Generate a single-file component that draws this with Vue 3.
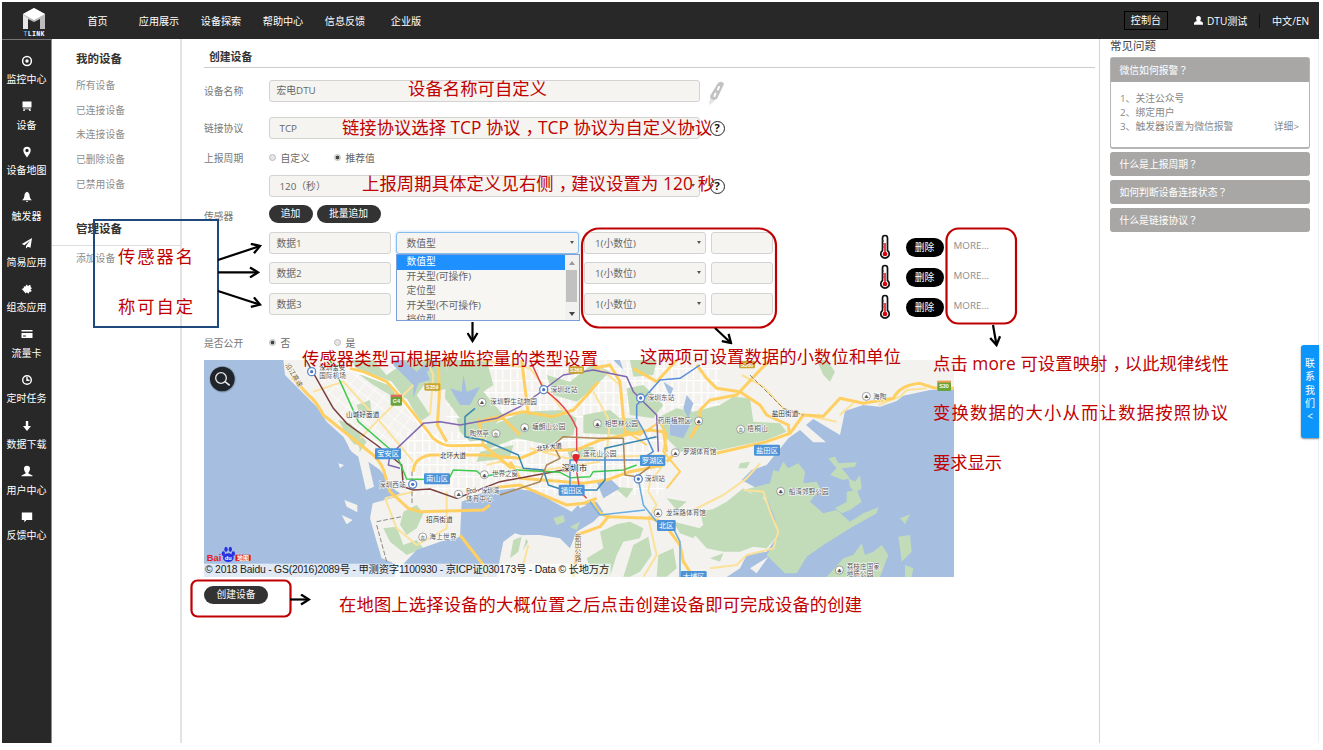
<script setup>
const topNav = ['首页', '应用展示', '设备探索', '帮助中心', '信息反馈', '企业版']
const sideNav = [
  { icon: 'target', text: '监控中心' },
  { icon: 'screen', text: '设备' },
  { icon: 'pin', text: '设备地图' },
  { icon: 'bell', text: '触发器' },
  { icon: 'plane', text: '简易应用' },
  { icon: 'puzzle', text: '组态应用' },
  { icon: 'card', text: '流量卡' },
  { icon: 'clock', text: '定时任务' },
  { icon: 'down', text: '数据下载' },
  { icon: 'user', text: '用户中心' },
  { icon: 'chat', text: '反馈中心' },
]
const myDevices = ['所有设备', '已连接设备', '未连接设备', '已删除设备', '已禁用设备']
const sensors = ['数据1', '数据2', '数据3']
const typeOptions = ['数值型', '开关型(可操作)', '定位型', '开关型(不可操作)', '挡位型']
const faqs = ['什么是上报周期', '如何判断设备连接状态', '什么是链接协议']

const districts = [
  { x: 525, y: 280, w: 78, t: '宝安区' },
  { x: 672, y: 355, w: 78, t: '南山区' },
  { x: 1076, y: 389, w: 78, t: '福田区' },
  { x: 1320, y: 300, w: 76, t: '罗湖区' },
  { x: 1371, y: 495, w: 56, t: '北区' },
  { x: 1662, y: 269, w: 78, t: '盐田区' },
  { x: 1442, y: 648, w: 78, t: '大埔区' },
]
const places = [
  { x: 358, y: 46, w: 78, t: '深圳宝安' },
  { x: 358, y: 68, w: 80, t: '国际机场' },
  { x: 438, y: 187, w: 100, t: '山城好面道', d: 1 },
  { x: 537, y: 395, w: 80, t: '深圳西站' },
  { x: 720, y: 310, w: 78, t: '北环大道', d: 1 },
  { x: 1010, y: 289, w: 78, t: '北环大道', d: 1, r: -8 },
  { x: 678, y: 500, w: 80, t: '招商街道', d: 1 },
  { x: 688, y: 553, w: 82, t: '海上世界' },
  { x: 1052, y: 111, w: 80, t: '深圳北站' },
  { x: 871, y: 148, w: 140, t: '深圳野生动物园' },
  { x: 996, y: 223, w: 100, t: '塘朗山公园' },
  { x: 809, y: 243, w: 58, t: '陶然亭' },
  { x: 876, y: 364, w: 78, t: '世界之窗' },
  { x: 798, y: 414, w: 100, t: 'Red•深圳湾' },
  { x: 798, y: 437, w: 80, t: '体育中心' },
  { x: 1149, y: 304, w: 100, t: '莲花山公园' },
  { x: 1214, y: 212, w: 100, t: '相思林公园' },
  { x: 1343, y: 136, w: 80, t: '深圳东站' },
  { x: 1373, y: 204, w: 100, t: '药用植物区' },
  { x: 1449, y: 298, w: 100, t: '罗湖体育馆' },
  { x: 1335, y: 379, w: 60, t: '深圳站' },
  { x: 1398, y: 481, w: 120, t: '龙琛路体育馆' },
  { x: 1715, y: 183, w: 80, t: '盐田街道', d: 1 },
  { x: 1642, y: 229, w: 62, t: '梧桐山' },
  { x: 2019, y: 131, w: 40, t: '海陶' },
  { x: 1766, y: 416, w: 120, t: '船湾郊野公园' },
  { x: 1940, y: 641, w: 100, t: '荔枝庄国家' },
  { x: 1940, y: 663, w: 80, t: '地质公园' },
]
const poiDots = [
  [846, 142, '▲'], [974, 218, '♣'], [888, 236, '血'], [853, 359, '♣'], [776, 418, '▲'],
  [1192, 206, '♣'], [1426, 293, '▲'], [1374, 474, '▲'], [1496, 198, '♣'], [1622, 223, '血'],
  [1999, 124, '▲'], [1742, 409, '♣'], [1918, 645, '♣'], [668, 546, '血'], [1126, 299, '♣'],
]
const stations = [[638, 388], [1031, 104], [1322, 129], [1315, 372], [335, 50]]

const arrows = [
  'M218 260L260 246', 'M218 272.4H258', 'M218 291L260 304.6',
  'M472.5 322V341', 'M715 328L731 343', 'M993 325L996.5 345', 'M290 599.5H309',
]
const notes = [
  { x: 408, y: 94.5, w: 139, t: '设备名称可自定义' },
  { x: 342, y: 134, w: 370, t: '链接协议选择 TCP 协议，TCP 协议为自定义协议' },
  { x: 362, y: 190, w: 353, t: '上报周期具体定义见右侧，建议设置为 120 秒' },
  { x: 118, y: 263, w: 75, t: '传感器名' },
  { x: 118, y: 313, w: 75, t: '称可自定' },
  { x: 302, y: 364.5, w: 296, t: '传感器类型可根据被监控量的类型设置' },
  { x: 640, y: 363, w: 261, t: '这两项可设置数据的小数位和单位' },
  { x: 933, y: 370, w: 296, t: '点击 more 可设置映射，以此规律线性' },
  { x: 933, y: 419, w: 295, t: '变换数据的大小从而让数据按照协议' },
  { x: 933, y: 469, w: 69, t: '要求显示' },
  { x: 339, y: 611, w: 523, t: '在地图上选择设备的大概位置之后点击创建设备即可完成设备的创建' },
]
// The comma sits in the middle of its em box, so it is nudged right and the next glyph back.
const shifts = (t) => {
  const i = t.indexOf('，')
  if (i < 0) return null
  return Array.from(t, (_, k) => (k === i ? 5 : k === i + 1 ? -5 : 0)).join(' ')
}
</script>

<template>
  <div class="page">
    <header class="top">
      <svg class="logo" viewBox="0 0 28 30" width="28" height="30">
        <path d="M3 6L14 0 25 6V21H20V11L14 14 8 11V21H3Z" fill="#bdbdbd" />
        <path d="M3 6L14 0 25 6 14 12Z" fill="#fff" />
        <path d="M3 7L8 10V21H3Z" fill="#e6e6e6" />
        <text x="3.500" y="28" textLength="21" class="logo-text"><tspan fill="#4fa9e0">T</tspan>LINK</text>
      </svg>
      <nav class="menu"><a v-for="n in topNav" :key="n">{{ n }}</a></nav>
      <div class="account">
        <span class="console">控制台</span>
        <svg class="user" width="9" height="9" viewBox="0 0 12 12"><path d="M6 0C8.200 0 9.200 1.400 9.200 3.200S8.200 6.600 7.800 6.800C9.500 7.300 12 8 12 10V11.500H0V10C0 8 2.500 7.300 4.200 6.800 3.800 6.600 2.800 5 2.800 3.200S3.800 0 6 0Z" fill="#fff" /></svg>
        <span class="name">DTU测试</span>
        <span class="lang">中文/EN</span>
      </div>
    </header>

    <div class="body">
      <nav class="side">
        <div v-for="s in sideNav" :key="s.icon" class="side-item">
          <svg width="12" height="12" viewBox="0 0 12 12" fill="#fff">
            <g v-if="s.icon === 'target'"><circle cx="6" cy="6" r="4.400" fill="none" stroke="#fff" stroke-width="1.500" /><circle cx="6" cy="6" r="1.700" /></g>
            <g v-else-if="s.icon === 'screen'"><path d="M1.500 1.500H10.500V7.500H1.500Z" /><path d="M2 8.500H10V9.300H2ZM3 9L2 11H3.500L4.500 9ZM9 9L10 11H8.500L7.500 9Z" /></g>
            <path v-else-if="s.icon === 'pin'" fill-rule="evenodd" d="M6 .8A3.700 3.700 0 0 1 9.700 4.500C9.700 7 7.500 9 6 11.500 4.500 9 2.300 7 2.300 4.500A3.700 3.700 0 0 1 6 .8ZM6 2.800A1.700 1.700 0 1 0 6 6.200 1.700 1.700 0 0 0 6 2.800Z" />
            <path v-else-if="s.icon === 'bell'" d="M6 .8C8 1.500 8.500 3 8.700 5.500 9 7.500 10 8 10.800 9.300H1.200C2 8 3 7.500 3.300 5.500 3.500 3 4 1.500 6 .8ZM4.800 10H7.200L6 11.300Z" />
            <path v-else-if="s.icon === 'plane'" d="M11 1L.8 7 3.500 8.200 9 3.500 5 9V11.500L6.800 9.700 9.500 10.800Z" />
            <path v-else-if="s.icon === 'puzzle'" d="M5.500 1.500L7.300 3.200C8 1 10.500 1.800 9.600 4L11 5.200 9.300 6.500C11.500 7 10.500 9.500 8.500 8.700L7.500 10.800 5.800 9.300 4.800 10.500 .8 6 2.800 5 2.800 3.200 4.500 3.500Z" />
            <path v-else-if="s.icon === 'card'" fill-rule="evenodd" d="M.5 2H11.500V3.500H.5ZM.5 5H11.500V10H.5ZM2 7.500V8.500H5V7.500Z" />
            <g v-else-if="s.icon === 'clock'" fill="none" stroke="#fff" stroke-width="1.400"><circle cx="6" cy="6" r="4.300" /><path d="M6 3V6.300H8.500" /></g>
            <path v-else-if="s.icon === 'down'" d="M4.800 1H7.200V6H10L6 11 2 6H4.800Z" />
            <path v-else-if="s.icon === 'user'" d="M6 .7C8 .7 9 2 9 3.700S8 7 7.500 7.300V8.500L11.500 10.500V11.300H.5V10.500L4.500 8.500V7.300C4 7 3 5.500 3 3.700S4 .7 6 .7Z" />
            <path v-else d="M.8 1.500H11.200V9H5.500L3.300 11.300V9H.8Z" />
          </svg>
          <span>{{ s.text }}</span>
        </div>
      </nav>

      <aside class="sub">
        <h3>我的设备</h3>
        <a v-for="d in myDevices" :key="d">{{ d }}</a>
        <h3 class="second">管理设备</h3>
        <a class="add">添加设备</a>
      </aside>

      <main class="main">
        <h2>创建设备</h2>
        <div class="row r1">
          <label>设备名称</label><div class="field wide">宏电DTU</div>
          <svg class="pen" width="18" height="24" viewBox="0 0 18 24">
            <path d="M10 2Q14-1 16 3L9 18 3 20 2 15Z" fill="#c2c2c2" /><path d="M2 17L7 20 1 24Z" fill="#e4e4e4" /><path d="M11 6L10 8.500M7.500 12.500L6.500 15" stroke="#fff" stroke-width="2" stroke-linecap="round" />
          </svg>
        </div>
        <div class="row r2">
          <label>链接协议</label><div class="field wide in">TCP<i class="caret"></i></div><b class="help">?</b>
        </div>
        <div class="row r3">
          <label>上报周期</label><i class="radio"></i><span class="opt">自定义</span><i class="radio on"></i><span>推荐值</span>
        </div>
        <div class="row r4">
          <label></label><div class="field wide in">120（秒）<i class="caret"></i></div><b class="help">?</b>
        </div>
        <div class="row r5">
          <label class="low">传感器</label><span class="pill add1">追加</span><span class="pill add2">批量追加</span>
        </div>
        <div class="sensors">
          <div v-for="(s, i) in sensors" :key="s" class="row sensor">
            <div class="field name">{{ s }}</div>
            <div class="field type" :class="{ focus: i === 0 }">
              数值型<i class="caret"></i>
              <div v-if="i === 0" class="drop">
                <div class="list"><div v-for="(o, k) in typeOptions" :key="o" :class="{ sel: k === 0 }">{{ o }}</div></div>
                <div class="scroll"><i class="up"></i><i class="thumb"></i><i class="dn"></i></div>
              </div>
            </div>
            <div class="field dec">1(小数位)<i class="caret"></i></div>
            <div class="field unit"></div>
            <svg class="thermo" width="12" height="26" viewBox="0 0 12 26">
              <path d="M3.500 16.500V4A2.500 2.500 0 0 1 8.500 4V16.500A4.200 4.200 0 1 1 3.500 16.500Z" fill="#fff" stroke="#111" stroke-width="1.700" />
              <path d="M6 9V18" stroke="#e0323c" stroke-width="1.800" /><circle cx="6" cy="20" r="2.300" fill="#d8000c" /><path d="M3.500 7H5M3.500 10H5M3.500 13H5" stroke="#444" />
            </svg>
            <span class="pill del">删除</span><span class="more">MORE...</span>
          </div>
        </div>
        <div class="row r6">
          <label>是否公开</label><i class="radio on"></i><span class="opt2">否</span><i class="radio"></i><span>是</span>
        </div>

        <svg class="map" width="750" height="217" viewBox="12 15 2250 651" preserveAspectRatio="none">
          <defs>
            <pattern id="streets" width="34" height="30" patternUnits="userSpaceOnUse" patternTransform="rotate(38)"><path d="M0 0H34M0 0V30" stroke="#fff" stroke-width="4" /></pattern>
            <pattern id="blocks" width="44" height="36" patternUnits="userSpaceOnUse"><path d="M0 5H44M8 0V36M28 5V36" stroke="#fff" stroke-width="4" /></pattern>
          </defs>
          <rect x="12" y="15" width="2250" height="651" fill="#f3f2ee" />
          <path d="M320 15H660L640 260 520 300 420 180Z" fill="url(#streets)" />
          <path d="M600 230H1390V420H620ZM740 15H1270V200H740ZM1000 20H1560V170H1180Z" fill="url(#blocks)" />
          <!-- parks and hills -->
          <g fill="#c2dcb9">
            <path d="M455 15H520L560 60 590 40 600 15H735L745 100 705 110 680 80 650 120 690 180 660 200 620 130 570 120 520 90 480 60Z" />
            <path d="M470 150L510 135 515 180 480 185ZM415 195L450 205 500 260 480 290 440 240Z" />
            <path d="M740 15H860L880 90 850 110 910 180 860 240 780 190 735 130Z" />
            <path d="M770 190L850 190 880 210 970 170 1090 165 1130 190 1120 240 1080 250 1050 270 950 250 870 280 820 270 780 230Z" />
            <path d="M1150 180L1230 165 1260 190 1310 190 1330 230 1270 240 1150 235Z" />
            <path d="M1040 60L1110 80 1180 25 1230 50 1180 100 1130 140 1060 120Z" />
            <path d="M1290 15H1370L1360 60 1300 65ZM1280 100L1330 90 1390 150 1360 190 1290 180Z" />
            <path d="M1370 190L1430 160 1480 170 1560 150 1600 125 1650 130 1660 200 1740 205 1760 230 1700 255 1560 285 1440 290 1400 250Z" />
            <path d="M840 290L940 270 930 310 830 320ZM1100 280L1180 275 1190 310 1110 315Z" />
            <path d="M610 470L650 450 670 475 650 520 620 540 600 510ZM550 520L590 515 610 570 650 555 670 580 620 600 570 560Z" />
            <path d="M945 575L970 540 985 560 960 600 930 650 905 640ZM1050 480L1110 475 1130 500 1080 520Z" />
            <path d="M1200 530L1250 508 1290 500 1330 520 1320 550 1270 560 1250 600 1230 665H1180L1160 610 1210 580ZM1300 570L1345 545 1355 600 1320 650 1290 665H1270ZM1240 395L1300 400 1280 430Z" />
            <path d="M1420 500L1500 520 1480 550 1440 535ZM1400 430L1460 440 1430 465ZM1375 600L1420 580 1430 640 1400 665H1370Z" />
            <path d="M1500 470L1540 462 1580 440 1630 400 1650 415 1680 415 1710 460 1735 540 1700 580 1660 575 1620 590 1570 590 1520 580 1480 535 1510 510Z" />
            <path d="M1850 15H1880L1905 50 1890 80 1870 60ZM1620 325L1650 320 1640 340 1615 340ZM1530 610L1570 595 1560 620Z" />
          </g>
          <!-- sea, bays and reservoirs -->
          <g fill="#a6bfe0">
            <path d="M12 15H250L255 60 300 105 350 155 380 200 430 245 455 290 475 305 498 405 522 395 505 320 540 345 585 405 600 415 585 427 518 445 510 490 530 560 545 610 575 622 590 640 600 666 612 625 650 585 720 560 780 545 785 440 850 412 940 400 1010 410 1060 440 1115 470 1140 445 1190 440 1210 470 1180 500 1130 530 1110 580 1080 550 1020 540 960 540 920 590 905 666H12Z" />
            <path d="M2262 103L2190 105 2110 122 2090 138 2040 155 1990 150 1935 168 1920 240 1895 225 1840 192 1818 210 1878 262 1840 262 1800 225 1765 250 1700 330 1655 345 1625 375 1680 405 1710 460 1735 540 1700 590 1640 600 1620 640 1580 666H2262Z" />
            <path d="M580 30L610 60 640 90 640 130 655 85 690 75 680 50 730 15H690L650 50 610 15H580ZM750 100L785 110 790 60 800 110 840 95 810 150 780 150ZM1190 380L1230 370 1260 400 1210 430ZM1410 190L1450 210 1480 190 1450 250 1410 240Z" />
            <path d="M1240 15L1270 45 1260 15ZM1390 80L1420 100 1410 125ZM1460 120L1480 145 1465 190 1450 160Z" />
          </g>
          <g fill="#f3f2ee">
            <path d="M433 435L472 450 472 472 440 455ZM425 480L458 495 440 508ZM415 325L432 330 420 340ZM442 265L475 270 480 285 450 285ZM575 580L610 590 600 666H585Z" />
            <path d="M910 560L945 535 980 545 965 600 1000 620 980 666H890L900 610ZM1130 440L1160 450 1140 460ZM1650 640L1705 605 1670 655Z" />
          </g>
          <path d="M1060 490L1090 480 1095 500 1070 510ZM1110 515L1140 500 1130 525ZM940 555L965 545 955 590 930 610Z" fill="#c2dcb9" />
          <!-- eastern peninsulas and islands -->
          <g fill="#c2dcb9">
            <path d="M1630 405L1710 385 1720 345 1735 350 1750 320 1765 340 1795 325 1815 350 1810 385 1850 380 1860 400 1830 440 1870 475 1910 465 1950 500 1990 475 2035 457 2030 475 1950 520 1870 570 1820 605 1790 655 1755 655 1700 600 1735 550 1725 490 1700 430Z" />
            <path d="M1885 310L1905 305 1915 325 1970 322 1965 335 1925 340 1950 370 1930 375 1890 360 1910 340ZM1945 370L1965 380 1980 360 1985 400 1965 415 1950 395ZM1940 410L1970 405 1985 440 1950 465 1925 475 1905 460 1940 440Z" />
            <path d="M2100 490L2130 478 2115 508ZM2095 545L2130 540 2135 590 2105 620 2100 580ZM1880 666L1930 610 1960 600 1985 565 1995 600 2020 590 2045 570 2065 600 2040 666ZM2115 630L2140 640 2135 666H2115Z" />
          </g>
          <!-- minor roads -->
          <g fill="none" stroke="#fbe19a" stroke-width="6" stroke-linejoin="round">
            <path d="M340 110L430 80 540 200 640 320M480 250L560 170 640 90M690 180L700 60 680 15M555 430L640 410M555 430L590 520 650 570 740 520 740 410M840 15L990 40 1100 180M1180 110L1230 200 1220 290M1170 15L1260 90M990 280L1100 310 1400 300M860 330L900 320 1000 350 1200 320" />
            <path d="M1345 410L1350 380 1390 330M1345 410L1370 450 1345 490 1370 600 1330 666M1625 60L1690 95 1750 160 1790 175 1910 200M1630 405L1690 410 1710 470 1735 530 1720 580 1640 600 1610 630 1530 640M1470 470L1570 420 1640 370 1680 325M960 666L985 570M1920 180L1960 145M2035 150L2100 125 2120 105 2180 100" />
          </g>
          <!-- main roads -->
          <g fill="none" stroke="#fff" stroke-width="13"><path d="M450 40L570 85 680 230 740 275 860 260" /></g>
          <g fill="none" stroke="#ffcf62" stroke-width="9" stroke-linejoin="round">
            <path d="M275 65L325 120Q350 140 370 180L520 300Q550 330 555 360L570 410 625 460 660 470 850 465 870 450" />
            <path d="M450 40L490 50 560 80 605 130 700 250Q730 275 760 272L850 270 935 340" />
            <path d="M640 350Q640 310 690 300L850 300 960 310 1020 285 1130 285 1200 255 1350 225 1390 230 1400 290" />
            <path d="M715 15L718 120 712 210 740 260M835 190L850 270M840 200L910 190 960 240M965 15L985 180M850 195L970 170 1060 185 1120 165 1170 110 1195 80" />
            <path d="M870 400L960 390 1040 425 1100 450 1150 445 1190 430M930 320L960 370 1150 385 1220 375 1290 350 1390 330M1180 40L1230 30 1260 80 1275 240M1400 320L1430 290M1300 40L1370 80 1430 15" />
            <path d="M1180 440Q1190 480 1230 485L1350 490Q1400 500 1410 530L1440 570 1450 620 1480 666M780 540L850 630 860 666M1130 540L1200 515 1225 485M1135 545L1120 666" />
            <path d="M1470 250L1500 200 1500 165 1530 135 1610 120 1685 40 1710 15M1490 30L1520 70 1550 100 1620 110 1680 150 1700 180 1765 210 1768 235" />
            <path d="M1550 295L1700 260 1770 235 1810 180 1870 184 1920 130 1990 145 2080 130Q2100 90 2160 85L2200 98 2262 100" />
            <path d="M1400 400L1440 350 1390 290 1400 240 1380 200 1320 240 1280 230 1340 270" stroke-width="6" />
          </g>
          <!-- metro and rail lines -->
          <g fill="none" stroke-width="4.500" stroke-linejoin="round">
            <path d="M318 15L400 160 440 205 530 270 605 330 610 395 640 405 690 402 770 430 900 380 1090 345 1110 345" stroke="#7b3d3d" />
            <path d="M390 15L430 100 475 200 590 300 620 372 745 375 760 345 830 348 850 365 950 345 1080 352 1110 368 1170 365 1180 350 1270 345 1310 330" stroke="#3fcb4e" />
            <path d="M600 340L565 330 570 300 670 205 720 200 780 210 890 190 960 155 1010 120 1090 60 1180 45 1280 65 1300 110 1370 180 1375 290" stroke="#8067b0" />
            <path d="M990 15L1031 104Q1100 150 1130 220V350L1140 410 1160 430" stroke="#e1464f" />
            <path d="M825 160L795 185 795 245 850 255 955 300 970 340 1030 345 1045 390 1090 405 1190 405 1215 375 1215 280 1370 245" stroke="#3a87b0" />
            <path d="M1500 30L1440 70 1380 75 1340 120 1310 150 1310 190 1330 225 1360 290 1320 315H1110V410" stroke="#568dda" />
            <path d="M900 420L1020 380 1040 330 1080 310 1060 270 1090 245 1190 250 1270 250 1275 360 1310 365 1350 335" stroke="#ad8756" />
            <path d="M1315 372L1330 450 1370 500 1420 520 1440 560 1440 666M1335 465L1200 480 1170 440" stroke="#69aee2" />
            <path d="M636 350V450M530 500L605 485M530 510L560 620M1650 60L1750 160 1810 180" stroke="#888" stroke-width="3" stroke-dasharray="14 6" />
          </g>
          <g class="lbl">
            <text v-for="p in places" :key="p.t + p.x" :x="p.x" :y="p.y" :textLength="p.w" :class="{ dark: p.d }" :transform="p.r ? `rotate(${p.r} ${p.x} ${p.y})` : null">{{ p.t }}</text>
            <text x="255" y="30" class="road" textLength="80" transform="rotate(58 255 30)">沿江高速</text>
            <text x="1134" y="538" class="road" writing-mode="tb" textLength="82">新田公路</text>
          </g>
          <g v-for="p in poiDots" :key="p[0]"><circle :cx="p[0]" :cy="p[1]" r="12" fill="#fff" stroke="#777" stroke-width="2" /><text :x="p[0]" :y="p[1] + 6" class="poi">{{ p[2] }}</text></g>
          <g v-for="s in stations" :key="s[0]"><circle :cx="s[0]" :cy="s[1]" r="12" fill="#fff" stroke="#5c88cc" stroke-width="4" /><circle :cx="s[0]" :cy="s[1]" r="5" fill="#4a78c4" /></g>
          <g class="lbl"><text x="1085" y="347" textLength="76" class="city">深圳市</text></g>
          <g class="district"><g v-for="d in districts" :key="d.t"><rect :x="d.x" :y="d.y" :width="d.w" height="33" rx="4" /><text :x="d.x + d.w / 2" :y="d.y + 24">{{ d.t }}</text></g></g>
          <g class="shield">
            <rect x="572" y="121" width="34" height="31" rx="4" fill="#6aa338" /><rect x="572" y="119" width="34" height="7" fill="#d96e5b" /><text x="589" y="145">G4</text>
            <rect x="2212" y="79" width="41" height="29" rx="4" fill="#6aa338" /><rect x="2212" y="77" width="41" height="6" fill="#e39c4c" /><text x="2232" y="100">S30</text>
            <rect x="673" y="85" width="48" height="22" rx="4" fill="#c9a530" /><text x="697" y="102">S359</text>
            <rect x="1106" y="34" width="46" height="22" rx="4" fill="#c9a530" /><text x="1129" y="51">S360</text>
            <rect x="1617" y="18" width="48" height="22" rx="4" fill="#c9a530" /><text x="1641" y="35">S360</text>
          </g>
          <path d="M1128 322C1112 306 1116 295 1128 297 1140 295 1145 306 1128 322Z" fill="#e5252c" />
          <circle cx="68" cy="73" r="40" fill="#000" opacity=".15" /><circle cx="67" cy="72" r="37" fill="#20252c" />
          <g fill="none" stroke="#e8e8e8" stroke-width="4"><circle cx="63" cy="69" r="16" /><path d="M75 80L89 91" stroke-width="5" /></g>
          <g class="baidu">
            <text x="20" y="617" textLength="44" fill="#e5191d">Bai</text>
            <g fill="#2932e1"><ellipse cx="85" cy="608" rx="16" ry="13" /><ellipse cx="70" cy="596" rx="5" ry="7" /><ellipse cx="78" cy="583" rx="5" ry="8" /><ellipse cx="91" cy="583" rx="5" ry="8" /><ellipse cx="100" cy="596" rx="5" ry="7" /></g>
            <text x="85" y="615" class="du">du</text>
            <rect x="106" y="599" width="46" height="19" rx="3" fill="#e5191d" /><text x="129" y="615" class="tu">地图</text>
          </g>
          <rect x="12" y="626" width="1220" height="40" fill="#fff" opacity=".65" />
          <text x="15" y="655" textLength="1213" class="copy">© 2018 Baidu - GS(2016)2089号 - 甲测资字1100930 - 京ICP证030173号 - Data © 长地万方</text>
        </svg>
        <div class="row r7"><span class="pill create">创建设备</span></div>
      </main>

      <aside class="faq">
        <h4>常见问题</h4>
        <section class="open">
          <div class="bar">微信如何报警<span class="q">？</span></div>
          <div class="answer">
            <p>1、关注公众号</p><p>2、绑定用户</p><p class="last"><span>3、触发器设置为微信报警</span><span>详细&gt;</span></p>
          </div>
        </section>
        <div v-for="f in faqs" :key="f" class="bar">{{ f }}<span class="q">？</span></div>
      </aside>
    </div>

    <div class="contact"><span>联</span><span>系</span><span>我</span><span>们</span><span>&lt;</span></div>

    <svg class="notes" width="1323" height="750" viewBox="0 0 1323 750">
      <defs><marker id="head" viewBox="0 0 12 12" refX="10" refY="6" markerWidth="12" markerHeight="12" markerUnits="userSpaceOnUse" orient="auto"><path d="M2 1L10 6 2 11" fill="none" stroke="#000" stroke-width="2.300" /></marker></defs>
      <rect x="94" y="220" width="124" height="107" fill="none" stroke="#1f497d" stroke-width="2" />
      <g fill="none" stroke="#c00000" stroke-width="2.200">
        <rect x="582" y="228.500" width="194" height="99" rx="17" />
        <rect x="946.500" y="228.500" width="69.500" height="95" rx="12" />
        <rect x="191.500" y="580.500" width="99" height="36" rx="6" />
      </g>
      <path v-for="a in arrows" :key="a" :d="a" stroke="#000" stroke-width="2.200" fill="none" marker-end="url(#head)" />
      <text v-for="n in notes" :key="n.t" :x="n.x" :y="n.y" :dx="shifts(n.t)" :textLength="n.w">{{ n.t }}</text>
    </svg>
  </div>
</template>

<style>
body { background: #fff; overflow: hidden; }
</style>

<style scoped>
* { box-sizing: border-box; margin: 0; padding: 0; }
.page { position: relative; width: 1323px; height: 750px; padding: 2px 4px 7px 2px; display: flex; flex-direction: column; overflow: hidden; font: 10px/14px "Open Sans", "Noto Sans CJK SC", sans-serif; color: #666; }
.top { height: 37px; flex: none; background: #282828; color: #fff; display: flex; align-items: center; }
.logo { margin: 5px 0 0 18px; }
.logo-text { font: bold 6.500px "Liberation Mono", monospace; fill: #fff; }
.menu { margin-left: 39.500px; display: grid; grid-template-columns: 51.300px 62px 62px 62px 66px auto; font-size: 10.1px; }
.account { margin-left: auto; display: flex; align-items: center; padding-right: 9px; font-size: 10.1px; }
.console { border: 1px solid #000; width: 44px; height: 19px; line-height: 17px; text-align: center; }
.user { margin: 0 4px 0 26px; }
.name { width: 53px; border-right: 1px solid #111; white-space: nowrap; }
.lang { margin-left: 12px; width: 38px; white-space: nowrap; }
.body { flex: 1; display: flex; min-height: 0; border-right: 1px solid #eee; }
.side { width: 50px; flex: none; background: #282828; border-right: 1px solid #8d8d8d; border-top: 1px solid #777; color: #fff; padding-top: 14.500px; }
.side-item { height: 45.65px; display: flex; flex-direction: column; align-items: center; line-height: 12px; gap: 6.500px; }
.side-item svg { flex: none; }
.sub { width: 130px; flex: none; border-right: 2px solid #e3e3e3; padding-top: 12.500px; color: #8d8d8d; display: flex; flex-direction: column; }
.sub h3 { font-size: 11.5px; line-height: 14px; color: #333; padding-left: 24px; margin-bottom: 7.500px; }
.sub a { height: 24.7px; line-height: 25px; padding-left: 24px; font-size: 9.8px; }
.sub .second { margin: 26px 0 0; height: 24px; border-bottom: 1px solid #ddd; }
.main { width: 918px; flex: none; padding-left: 22px; border-right: 1px solid #d5d5d5; }
.main h2 { width: 891px; height: 29px; border-bottom: 1px solid #ccc; font-size: 10.8px; line-height: 35px; color: #333; padding-left: 5px; }
.row { display: flex; align-items: center; font-size: 9.8px; }
label { width: 64.500px; flex: none; color: #777; padding-top: 2px; }
.low { padding-top: 5px; }
.field { height: 22px; border: 1px solid #d3d3d3; border-radius: 3px; background: #f5f4f1; padding-left: 7px; line-height: 20px; position: relative; color: #666; white-space: nowrap; }
.wide { width: 431px; }
.in { padding-left: 10px; line-height: 21px; }
.caret { position: absolute; right: 4px; top: 8px; border: 2px solid transparent; border-top: 3px solid #555; border-bottom: 0; }
.r1 { margin-top: 12px; height: 22px; }
.r2 { margin-top: 15px; height: 22px; }
.r3 { margin-top: 9px; height: 20px; }
.r3 span { padding-top: 1px; }
.r4 { margin-top: 7px; height: 22px; }
.r5 { margin-top: 8px; height: 18px; }
.r6 { margin-top: 21px; height: 15px; }
.r6 span { padding-top: 2px; }
.r7 { margin-top: 9px; }
.pen { margin: 4px 0 0 8px; }
.help { margin-left: 10px; width: 15px; height: 15px; border: 1.500px solid #222; border-radius: 50%; font: bold 11px/12px "Open Sans", sans-serif; text-align: center; color: #111; }
.radio { width: 7px; height: 7px; border: 1px solid #bbb; border-radius: 50%; background: #e6e6e6; margin: -1px 5px 0 0; }
.radio.on { background: radial-gradient(#444 0 1.500px, #ddd 2.200px); }
.opt { width: 53px; }
.opt2 { width: 53px; }
.pill { display: block; height: 18px; line-height: 18px; border-radius: 9px; background: #333; color: #fff; text-align: center; }
.add1 { width: 44px; margin-right: 4px; }
.add2 { width: 64px; }
.create { width: 64px; }
.sensors { margin: 9px 0 0 64.500px; display: flex; flex-direction: column; gap: 8.300px; }
.sensor { height: 22px; gap: 5px; }
.sensor .field { line-height: 21.500px; }
.name.field { width: 122px; border: 1px solid #d3d3d3; }
.type { width: 183.500px; padding-left: 10px; }
.focus { border-color: #86bdee; box-shadow: 0 0 3px #a9d3f6; }
.dec { width: 122px; padding-left: 10px; }
.unit { width: 62px; }
.thermo { margin: 7px 0 0 100.500px; }
.del { width: 38px; height: 19px; line-height: 19px; background: #000; border-radius: 10px; margin: 8px 0 0 10px; }
.more { margin: 5px 0 0 5px; color: #8d8d8d; }
.drop { position: absolute; z-index: 2; left: -1px; top: 21px; width: 184px; height: 67px; border: 1px solid #7c9ed8; background: #f7f6f3; display: flex; overflow: hidden; }
.list { flex: 1; line-height: 14.500px; }
.list div { padding-left: 10px; height: 14.600px; }
.list .sel { background: #1e90ff; color: #fff; }
.scroll { width: 14px; background: #f1f1f1; display: flex; flex-direction: column; align-items: center; }
.up { margin-top: 6px; border: 3px solid transparent; border-bottom: 4px solid #999; border-top: 0; }
.thumb { margin-top: 5px; width: 11px; height: 32px; background: #c1c1c1; }
.dn { margin-top: 10px; border: 3px solid transparent; border-top: 4px solid #444; border-bottom: 0; }
.map { display: block; margin-top: 9px; }
.lbl text { font: 20px "Noto Sans CJK SC", sans-serif; fill: #555; stroke: #fff; stroke-width: 3px; paint-order: stroke; }
.lbl .dark { fill: #333; }
.lbl .city { font-size: 25px; fill: #222; }
.lbl .road { fill: #7b5a20; }
.poi { font: 13px "Noto Sans CJK SC", "DejaVu Sans", sans-serif; text-anchor: middle; fill: #555; }
.district rect { fill: #4a93d9; }
.district text { font: 22px "Noto Sans CJK SC", sans-serif; fill: #fff; text-anchor: middle; }
.shield text { font: bold 16px "Liberation Sans", sans-serif; fill: #fff; text-anchor: middle; }
.baidu text { font: bold 28px "Liberation Sans", sans-serif; }
.baidu .du { font-size: 17px; fill: #fff; text-anchor: middle; }
.baidu .tu { font: bold 18px "Noto Sans CJK SC", sans-serif; fill: #fff; text-anchor: middle; }
.copy { font: 31px "Liberation Sans", "Noto Sans CJK SC", sans-serif; fill: #222; }
.faq { flex: 1; padding: 0 8px 0 10px; }
.faq h4 { font-size: 11.5px; font-weight: 400; line-height: 13px; height: 18px; color: #444; }
.bar { height: 24px; margin-bottom: 4px; line-height: 25px; border-radius: 3px; background: #a8a7a5; color: #fff; padding-left: 9.500px; font-size: 9.8px; }
.q { font-family: "Noto Sans CJK TC", sans-serif; }
.open { height: 92px; border: 1px solid #b5b5b5; border-bottom-width: 2px; border-radius: 3px; margin-bottom: 3px; }
.open .bar { margin: 0; border-radius: 0; padding-left: 8.500px; line-height: 24px; }
.answer { padding: 10px 10px 0 9px; color: #888; font-size: 9.8px; }
.last { display: flex; justify-content: space-between; }
.contact { position: absolute; left: 1301px; top: 345px; width: 18px; height: 93px; background: #0c95fb; border-radius: 3px 0 0 3px; box-shadow: 0 1px 2px #888; color: #fff; display: flex; flex-direction: column; align-items: center; padding-top: 12px; line-height: 13.300px; }
.notes { position: absolute; left: 0; top: 0; z-index: 5; pointer-events: none; }
.notes text { font: 17.300px "Open Sans", "Noto Sans CJK SC", sans-serif; fill: #c00000; white-space: pre; }
</style>
